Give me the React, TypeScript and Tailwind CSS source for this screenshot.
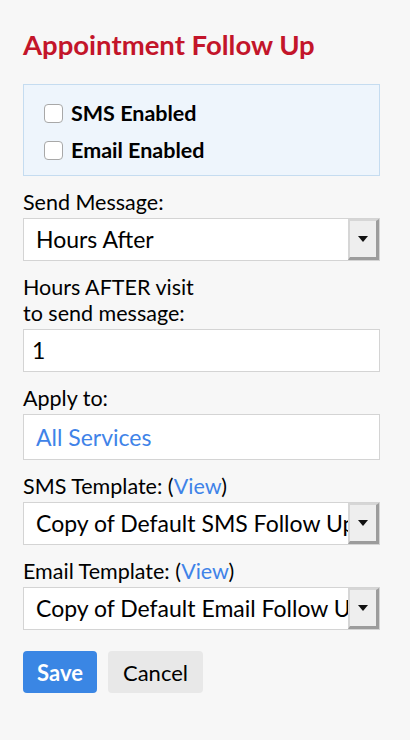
import React from 'react';

const font = { fontFamily: 'Lato, "Open Sans", sans-serif' };

const Caret: React.FC = () => (
  <div className="flex w-[31px] shrink-0 items-center justify-center border-t-2 border-l-2 border-r-[3px] border-b-[3px] border-t-[#d6d6d6] border-l-[#d6d6d6] border-r-[#9c9c9c] border-b-[#9c9c9c] bg-[#eeeeee]">
    <svg width="10" height="6" viewBox="0 0 10 6">
      <path d="M0 0 L10 0 L5 6 Z" fill="#111" />
    </svg>
  </div>
);

const Select: React.FC<{ value: string }> = ({ value }) => (
  <div className="flex h-[43px] w-[357px] border border-[#d4d4d4] bg-white">
    <div className="flex-1 overflow-hidden whitespace-nowrap pl-3 text-[23px] leading-[41px] text-black">
      {value}
    </div>
    <Caret />
  </div>
);

const Field: React.FC<{ label: React.ReactNode; children: React.ReactNode }> = ({ label, children }) => (
  <div className="mt-[13px]">
    <div className="mb-[3px] text-[21.5px] leading-[26px] text-black">{label}</div>
    {children}
  </div>
);

const Check: React.FC<{ label: string }> = ({ label }) => (
  <label className="flex h-7 items-center">
    <span className="h-[19px] w-[19px] rounded-[4px] border border-[#a8a8a8] bg-white" />
    <span className="ml-2 text-[21.5px] font-bold text-black">{label}</span>
  </label>
);

export default function App() {
  return (
    <div className="min-h-[740px] w-[410px] bg-[#f7f7f7] pl-[23px] pt-[30px]" style={font}>
      <h1 className="mb-6 text-[27.5px] font-bold leading-[30px] text-[#c3152a]">Appointment Follow Up</h1>

      <div className="flex h-[92px] w-[357px] flex-col gap-[9px] border border-[#c5dcf0] bg-[#eef5fc] pl-5 pt-[14px]">
        <Check label="SMS Enabled" />
        <Check label="Email Enabled" />
      </div>

      <div className="mt-[1px]">
        <Field label="Send Message:">
          <Select value="Hours After" />
        </Field>

        <Field label={<>Hours AFTER visit<br />to send message:</>}>
          <div className="h-[43px] w-[357px] border border-[#d4d4d4] bg-white pl-2 text-[23px] leading-[41px] text-black">1</div>
        </Field>

        <Field label="Apply to:">
          <div className="h-[46px] w-[357px] border border-[#d4d4d4] bg-white pl-3 text-[23px] leading-[44px] text-[#3f83e8]">All Services</div>
        </Field>

        <Field label={<>SMS Template: (<span className="text-[#3f83e8]">View</span>)</>}>
          <Select value="Copy of Default SMS Follow Up" />
        </Field>

        <Field label={<>Email Template: (<span className="text-[#3f83e8]">View</span>)</>}>
          <Select value="Copy of Default Email Follow Up" />
        </Field>
      </div>

      <div className="mt-[21px] flex gap-[11px]">
        <button className="h-[42px] w-[74px] rounded-[4px] bg-[#3a86e4] text-[22px] font-bold text-white">Save</button>
        <button className="h-[42px] w-[95px] rounded-[4px] bg-[#e8e8e8] text-[22px] text-black">Cancel</button>
      </div>
    </div>
  );
}
